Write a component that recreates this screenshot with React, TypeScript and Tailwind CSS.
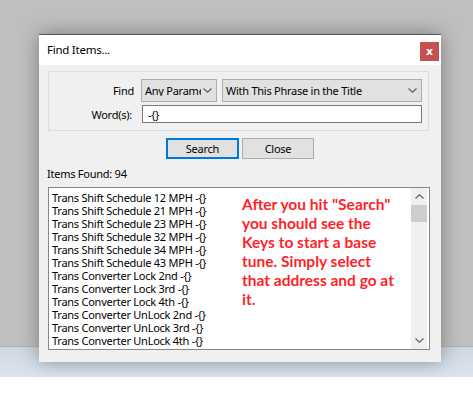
import React from "react";

const items = [
  "Trans Shift Schedule 12 MPH -{}",
  "Trans Shift Schedule 21 MPH -{}",
  "Trans Shift Schedule 23 MPH -{}",
  "Trans Shift Schedule 32 MPH -{}",
  "Trans Shift Schedule 34 MPH -{}",
  "Trans Shift Schedule 43 MPH -{}",
  "Trans Converter Lock 2nd -{}",
  "Trans Converter Lock 3rd -{}",
  "Trans Converter Lock 4th -{}",
  "Trans Converter UnLock 2nd -{}",
  "Trans Converter UnLock 3rd -{}",
  "Trans Converter UnLock 4th -{}",
  "Knock Sensor Advance Units -{}",
];

function Chevron({ up = false }: { up?: boolean }) {
  return (
    <svg width="9" height="5" viewBox="0 0 9 5" className="block">
      <path
        d={up ? "M0.5 4.5 L4.5 0.8 L8.5 4.5" : "M0.5 0.5 L4.5 4.2 L8.5 0.5"}
        fill="none"
        stroke="#606060"
        strokeWidth="1.2"
      />
    </svg>
  );
}

export default function App() {
  const ui = { fontFamily: '"Noto Sans", "Segoe UI", sans-serif', letterSpacing: "-0.25px" };
  return (
    <div className="relative w-[473px] h-[395px] overflow-hidden bg-white" style={ui}>
      <div className="h-[347px] bg-[#bfbfbf] border-b border-[#a9b3bf]" />
      <div className="h-[30px] bg-gradient-to-b from-[#cdd6e1] to-[#dce5ef]" />

      <div className="absolute left-[39px] top-[34px] w-[402px] h-[328px] bg-[#f0f0f0] border-t border-[#555555] shadow-[0_0_18px_rgba(0,0,0,0.35)] flex flex-col text-[11px] text-black">
        {/* title bar */}
        <div className="h-[30px] bg-white flex items-start justify-between">
          <div className="pl-[8px] h-[30px] flex items-center text-[11.5px] leading-none text-[#000]">Find Items...</div>
          <div className="mt-[7px] mr-[2px] w-[19px] h-[19px] bg-[#c75050] flex items-center justify-center">
            <span className="text-white text-[11px] font-bold leading-none" style={{ fontFamily: '"DejaVu Sans", sans-serif', letterSpacing: 0 }}>x</span>
          </div>
        </div>

        {/* group box */}
        <div className="mt-[6px] ml-[9px] w-[381px] h-[60px] border border-[#dcdcdc] flex flex-col">
          <div className="mt-[7px] flex items-center h-[23px]">
            <div className="w-[85px] text-right leading-none">Find</div>
            <div className="ml-[7px] w-[76px] h-[23px] bg-[#e1e1e1] border border-[#adadad] flex items-center justify-between pl-[3px] pr-[4px] overflow-hidden">
              <span className="whitespace-nowrap overflow-hidden w-[56px] leading-none">Any Parameter</span>
              <Chevron />
            </div>
            <div className="ml-[5px] w-[200px] h-[23px] bg-[#e1e1e1] border border-[#adadad] flex items-center justify-between pl-[3px] pr-[4px]">
              <span className="whitespace-nowrap leading-none">With This Phrase in the Title</span>
              <Chevron />
            </div>
          </div>
          <div className="mt-[3px] flex items-center h-[18px]">
            <div className="w-[83px] text-right leading-none">Word(s):</div>
            <div className="ml-[10px] w-[280px] h-[18px] bg-white border border-[#7a7a7a] flex items-center pl-[5px] leading-none">-{"{}"}</div>
          </div>
        </div>

        {/* buttons */}
        <div className="mt-[7px] flex justify-center gap-[3px]">
          <div className="w-[73px] h-[21px] bg-[#e1e1e1] border-2 border-[#0078d7] flex items-center justify-center leading-none">Search</div>
          <div className="w-[72px] h-[21px] bg-[#e1e1e1] border border-[#adadad] flex items-center justify-center leading-none">Close</div>
        </div>

        <div className="mt-[7px] pl-[8px] h-[16px] leading-[16px]">Items Found: 94</div>

        {/* list */}
        <div className="relative mt-[5px] ml-[9px] w-[382px] h-[163px] bg-white border border-[#828790] flex overflow-hidden">
          <div className="flex-1 pt-[3px] pl-[3px] overflow-hidden">
            {items.map((t) => (
              <div key={t} className="h-[13px] leading-[13px] whitespace-nowrap">{t}</div>
            ))}
          </div>
          <div className="w-[16px] mr-[2px] bg-[#f0f0f0] flex flex-col">
            <div className="h-[17px] flex items-center justify-center"><Chevron up /></div>
            <div className="h-[17px] bg-[#cdcdcd]" />
            <div className="flex-1" />
            <div className="h-[17px] flex items-center justify-center"><Chevron /></div>
          </div>
          <div
            className="absolute left-[193px] top-[7px] text-[15.5px] leading-[19px] font-bold text-[#ff1f2a]"
            style={{ fontFamily: 'Lato, "Noto Sans", sans-serif', letterSpacing: 0 }}
          >
            After you hit "Search"<br />
            you should see the<br />
            Keys to start a base<br />
            tune. Simply select<br />
            that address and go at<br />
            it.
          </div>
        </div>
      </div>
    </div>
  );
}
